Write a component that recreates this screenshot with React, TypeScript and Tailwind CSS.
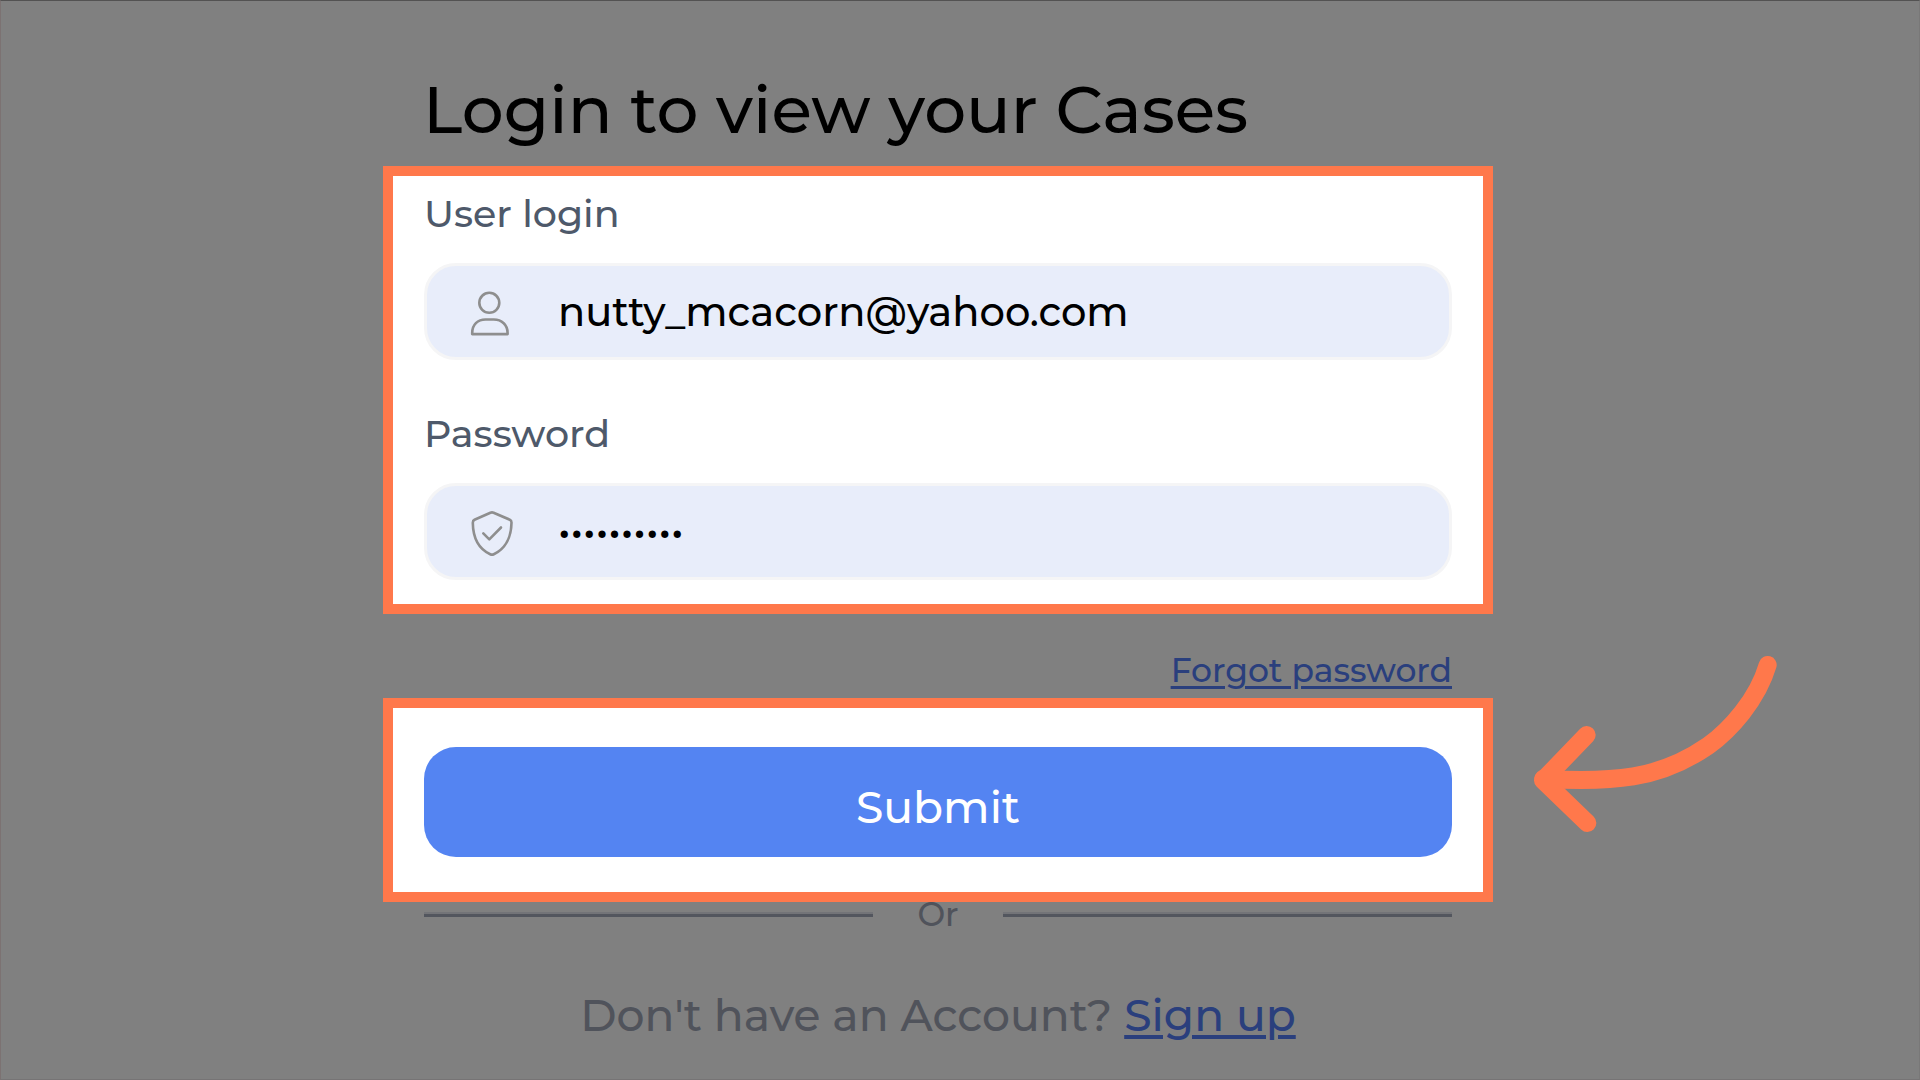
import type { ReactNode } from 'react';

interface FieldProps {
  id: string;
  label: string;
  type: 'text' | 'password';
  value: string;
  icon: ReactNode;
}

export default function App() {
  return (
    <main className="flex min-h-screen justify-center overflow-x-hidden border border-t-[#535252] border-r-[#797878] border-b-[#767475] border-l-[#7c7272] bg-[#808080] pt-[69px] pr-11 font-['Montserrat','Inter',sans-serif] font-medium">
      <form
        className="w-full max-w-[1110px]"
        onSubmit={(event) => event.preventDefault()}
      >
        <h1 className="mb-4 px-10 text-[66px] leading-[80px] whitespace-nowrap text-black">
          Login to view your Cases
        </h1>

        <section className="flex flex-col gap-[50px] border-10 border-[#ff784b] bg-white px-[31px] pt-[14px] pb-6">
          <Field
            id="login"
            label="User login"
            type="text"
            value="nutty_mcacorn@yahoo.com"
            icon={<UserIcon />}
          />
          <Field
            id="password"
            label="Password"
            type="password"
            value="acorns1234"
            icon={<ShieldIcon />}
          />
        </section>

        <div className="flex justify-end px-[41px] pt-9 pb-2">
          <a
            href="#forgot"
            className="text-[33px] leading-10 text-[#2a3f7d] underline decoration-3 underline-offset-4"
          >
            Forgot password
          </a>
        </div>

        <section className="relative border-10 border-[#ff784b] bg-white px-[31px] pt-[39px] pb-[35px]">
          <button
            type="submit"
            className="h-[110px] w-full rounded-[32px] bg-[#5484f2] pt-[10px] text-[44px] text-white"
          >
            Submit
          </button>
          <ArrowPointer />
        </section>

        <div className="flex items-center gap-11 px-[41px] text-[33px] leading-6 text-[#50535b]">
          <Rule />
          Or
          <Rule />
        </div>

        <p className="mt-[61px] text-center text-[44px] leading-14 whitespace-nowrap text-[#50535b]">
          Don't have an Account?{' '}
          <a
            href="#signup"
            className="text-[#2a3f7d] underline decoration-4 underline-offset-4"
          >
            Sign up
          </a>
        </p>
      </form>
    </main>
  );
}

function Field({ id, label, type, value, icon }: FieldProps) {
  return (
    <div className="flex flex-col gap-[25px]">
      <label htmlFor={id} className="text-[38px] leading-12 text-[#4e596a]">
        {label}
      </label>
      <div className="flex h-[97px] items-center gap-[42px] rounded-[32px] border-3 border-[#f5f5f6] bg-[#e8edfa] pr-8 pl-[41px]">
        {icon}
        <input
          id={id}
          type={type}
          defaultValue={value}
          className="h-full min-w-0 flex-1 bg-transparent text-[40px] text-black outline-none"
        />
      </div>
    </div>
  );
}

function Rule() {
  return (
    <span className="h-[5px] flex-1 border-t-2 border-[#737478] bg-[#53565e]" />
  );
}

function UserIcon() {
  return (
    <svg
      viewBox="0 -1.5 48 50"
      className="h-[50px] w-12 shrink-0"
      fill="none"
      stroke="#8e8e8e"
      strokeWidth="2.6"
      strokeLinejoin="round"
      aria-hidden="true"
    >
      <circle cx="21.3" cy="14.3" r="10" />
      <path d="M4.2 45.6v-1.2C4.2 36.2 9.6 31 17.6 31h8.2c8 0 13.8 5.4 13.8 13.4v1.2z" />
    </svg>
  );
}

function ShieldIcon() {
  return (
    <svg
      viewBox="0 -1.5 48 50"
      className="h-[50px] w-12 shrink-0"
      fill="none"
      stroke="#8e8e8e"
      strokeWidth="2.6"
      strokeLinecap="round"
      strokeLinejoin="round"
      aria-hidden="true"
    >
      <path d="M22.4 4.2q1.6-.7 3.2 0L41.8 11.2q1.8.8 1.7 3C43.3 29 37 40.5 25.8 45.7q-1.8.8-3.6 0C11 40.5 5 29 4.8 14.2q0-2.2 1.7-3z" />
      <path d="M15.3 24.8l6 6L33 19" />
    </svg>
  );
}

function ArrowPointer() {
  return (
    <svg
      viewBox="0 0 960 690"
      className="pointer-events-none absolute -top-[78px] left-full ml-[17px] h-[230px] w-80 max-w-none"
      fill="none"
      stroke="#ff784b"
      strokeWidth="54"
      strokeLinecap="round"
      strokeLinejoin="round"
      aria-hidden="true"
    >
      <path d="M803 105C772 210 690 300 625 347C560 392 490 425 400 439C320 452 230 452 130 446" />
      <path d="M260 315L129 451L262 579" />
    </svg>
  );
}
